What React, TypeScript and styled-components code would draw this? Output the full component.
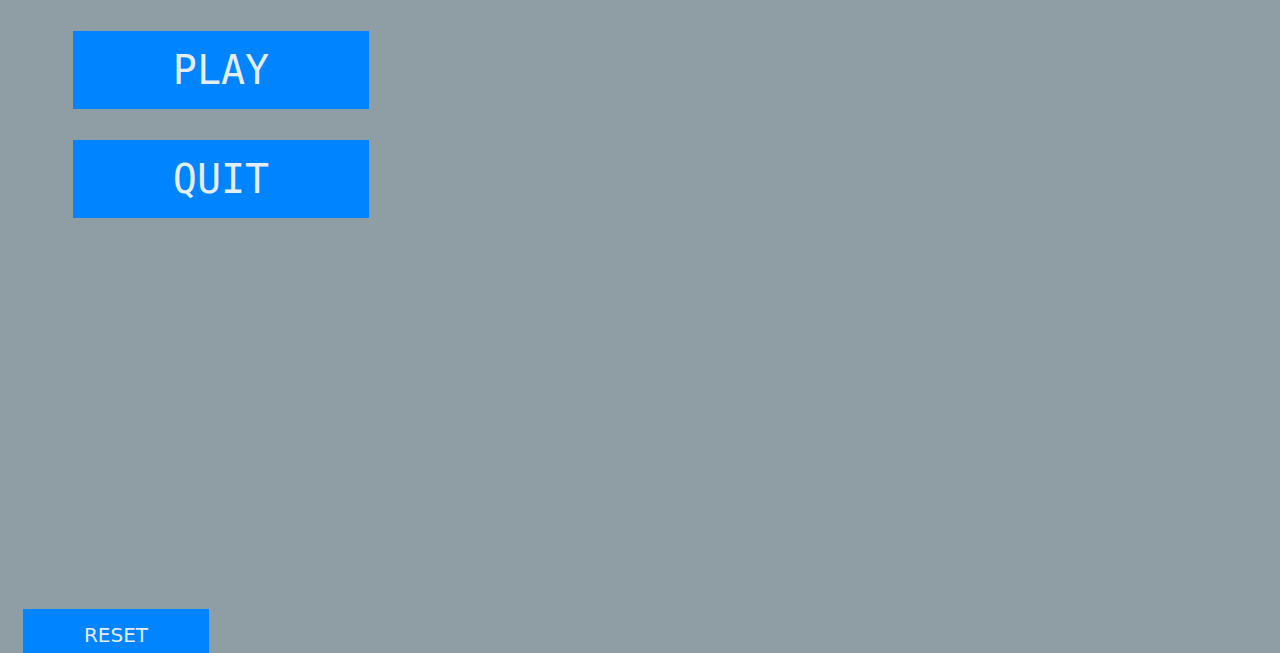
import styled, { createGlobalStyle } from 'styled-components';

const GlobalStyle = createGlobalStyle`
  html, body {
    margin: 0;
    padding: 0;
    background: #8f9ea4;
  }
`;

const App = () => {
  return (
    <Screen>
      <GlobalStyle />
      <Menu>
        <MenuButton>PLAY</MenuButton>
        <MenuButton>QUIT</MenuButton>
      </Menu>
      <ResetButton>RESET</ResetButton>
    </Screen>
  );
};

const Screen = styled.div`
  display: flex;
  flex-direction: column;
  height: 100vh;
  overflow: hidden;
  background: #8f9ea4;
`;

const Menu = styled.div`
  display: flex;
  flex-direction: column;
  gap: 31px;
  padding: 31px 0 0 73px;
`;

const MenuButton = styled.button`
  width: 296px;
  height: 78px;
  border: none;
  background: #0084ff;
  color: #e4ecf4;
  font-family: 'DejaVu Sans Mono', monospace;
  font-size: 40px;
  padding: 0;
  cursor: pointer;
`;

const ResetButton = styled.button`
  margin: auto 0 -8px 23px;
  width: 186px;
  height: 52px;
  flex-shrink: 0;
  border: none;
  background: #0084ff;
  color: #e4ecf4;
  font-family: 'DejaVu Sans', sans-serif;
  font-size: 20px;
  padding: 0;
  cursor: pointer;
`;

export default App;
